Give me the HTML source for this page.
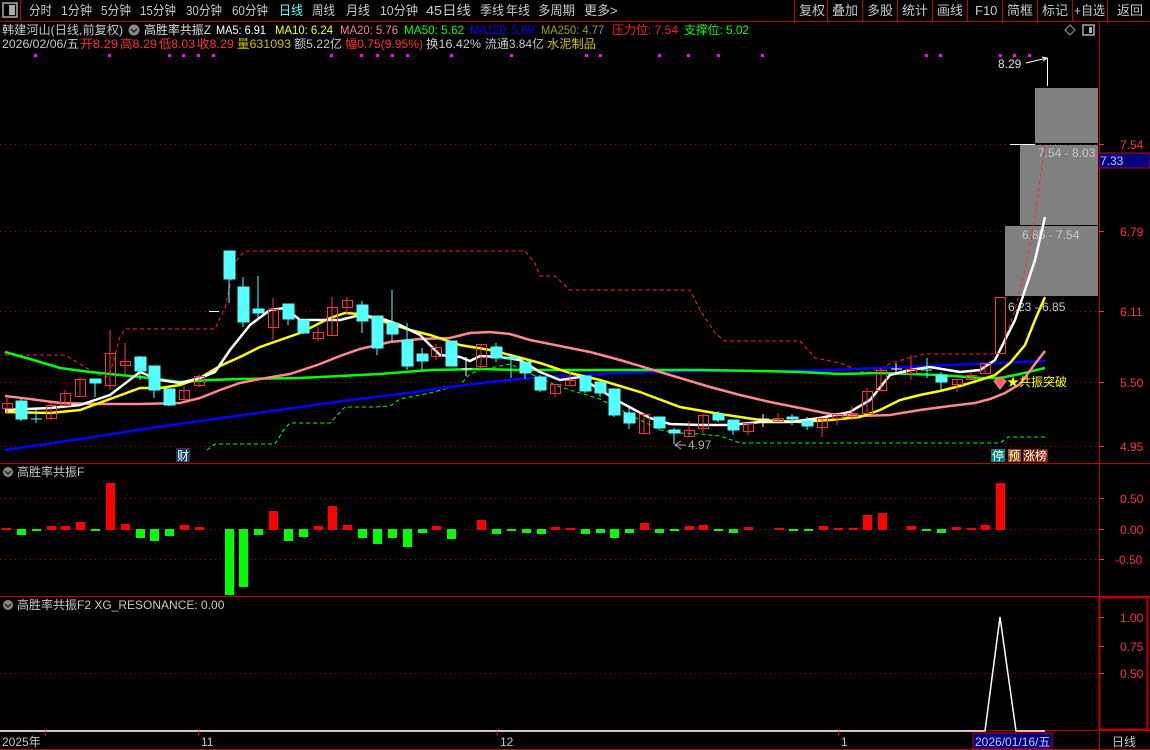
<!DOCTYPE html>
<html><head><meta charset="utf-8">
<style>
html,body{margin:0;padding:0;background:#000;width:1150px;height:750px;overflow:hidden}
svg{display:block}
text{font-family:"Liberation Sans","Noto Sans CJK SC",sans-serif;font-size:12px}
.tb{font-size:13px;fill:#c8c8c8}
</style></head><body>
<svg width="1150" height="750" viewBox="0 0 1150 750" xmlns="http://www.w3.org/2000/svg">
<rect width="1150" height="750" fill="#000"/>
<!-- toolbar -->
<rect x="3" y="3" width="14" height="14" fill="none" stroke="#aaa" stroke-width="1.5"/>
<rect x="9" y="5" width="6" height="10" fill="#aaa"/>
<line x1="20.5" y1="0" x2="20.5" y2="21" stroke="#c00000"/>
<g class="tb">
<text x="29" y="15" class="tb" textLength="23" lengthAdjust="spacingAndGlyphs">分时</text>
<text x="61" y="15" class="tb" textLength="31" lengthAdjust="spacingAndGlyphs">1分钟</text>
<text x="101" y="15" class="tb" textLength="30" lengthAdjust="spacingAndGlyphs">5分钟</text>
<text x="140" y="15" class="tb" textLength="36" lengthAdjust="spacingAndGlyphs">15分钟</text>
<text x="186" y="15" class="tb" textLength="36" lengthAdjust="spacingAndGlyphs">30分钟</text>
<text x="232" y="15" class="tb" textLength="36" lengthAdjust="spacingAndGlyphs">60分钟</text>
<text x="279" y="15" class="tb" style="fill:#54ffff" textLength="24" lengthAdjust="spacingAndGlyphs">日线</text>
<text x="312" y="15" class="tb" textLength="23" lengthAdjust="spacingAndGlyphs">周线</text>
<text x="346" y="15" class="tb" textLength="24" lengthAdjust="spacingAndGlyphs">月线</text>
<text x="380" y="15" class="tb" textLength="38" lengthAdjust="spacingAndGlyphs">10分钟</text>
<text x="426" y="15" class="tb" textLength="45" lengthAdjust="spacingAndGlyphs">45日线</text>
<text x="480" y="15" class="tb" textLength="24" lengthAdjust="spacingAndGlyphs">季线</text>
<text x="506" y="15" class="tb" textLength="24" lengthAdjust="spacingAndGlyphs">年线</text>
<text x="538" y="15" class="tb" textLength="37" lengthAdjust="spacingAndGlyphs">多周期</text>
<text x="584" y="15" class="tb">更多&gt;</text>
<text x="799" y="15" class="tb">复权</text>
<text x="832" y="15" class="tb">叠加</text>
<text x="867" y="15" class="tb">多股</text>
<text x="902" y="15" class="tb">统计</text>
<text x="937" y="15" class="tb">画线</text>
<text x="975" y="15" class="tb">F10</text>
<text x="1007" y="15" class="tb">简框</text>
<text x="1042" y="15" class="tb">标记</text>
<text x="1074" y="15" class="tb" textLength="31" lengthAdjust="spacingAndGlyphs">+自选</text>
<text x="1117" y="15" class="tb">返回</text>
</g>
<g stroke="#c00000">
<line x1="794.5" y1="0" x2="794.5" y2="21"/><line x1="827.5" y1="0" x2="827.5" y2="21"/><line x1="862.5" y1="0" x2="862.5" y2="21"/><line x1="897.5" y1="0" x2="897.5" y2="21"/><line x1="932.5" y1="0" x2="932.5" y2="21"/><line x1="967.5" y1="0" x2="967.5" y2="21"/><line x1="1002.5" y1="0" x2="1002.5" y2="21"/><line x1="1037.5" y1="0" x2="1037.5" y2="21"/><line x1="1072.5" y1="0" x2="1072.5" y2="21"/><line x1="1107.5" y1="0" x2="1107.5" y2="21"/>
<line x1="0" y1="21.5" x2="1150" y2="21.5"/>
<line x1="1099.5" y1="21" x2="1099.5" y2="750"/>
<line x1="0" y1="463.5" x2="1150" y2="463.5"/>
<line x1="0" y1="596.5" x2="1150" y2="596.5"/>
<line x1="0" y1="730.5" x2="1150" y2="730.5"/>
<line x1="0" y1="749.5" x2="1150" y2="749.5"/>
</g>
<rect x="1099.5" y="597.5" width="48" height="132" fill="none" stroke="#c00000" stroke-width="2"/>
<!-- header -->
<text x="2" y="34" fill="#c8c8c8" textLength="121" lengthAdjust="spacingAndGlyphs">韩建河山(日线,前复权)</text>
<circle cx="134" cy="30" r="5.5" fill="#888"/><path d="M131 29 L134 32 L137 29" stroke="#222" fill="none" stroke-width="1.5"/>
<text x="144" y="34" fill="#e0e0e0" textLength="67" lengthAdjust="spacingAndGlyphs">高胜率共振Z</text>
<text x="216" y="34" fill="#fff" textLength="50" lengthAdjust="spacingAndGlyphs">MA5: 6.91</text>
<text x="275" y="34" fill="#ffff00" textLength="58" lengthAdjust="spacingAndGlyphs">MA10: 6.24</text>
<text x="340" y="34" fill="#ff8080" textLength="58" lengthAdjust="spacingAndGlyphs">MA20: 5.76</text>
<text x="404" y="34" fill="#00ff00" textLength="60" lengthAdjust="spacingAndGlyphs">MA50: 5.62</text>
<text x="470" y="34" fill="#0000ff" textLength="64" lengthAdjust="spacingAndGlyphs">MA120: 5.69</text>
<text x="541" y="34" fill="#a0a000" textLength="63" lengthAdjust="spacingAndGlyphs">MA250: 4.77</text>
<text x="612" y="34" fill="#ff2020" textLength="66" lengthAdjust="spacingAndGlyphs">压力位: 7.54</text>
<text x="684" y="34" fill="#00ff00" textLength="65" lengthAdjust="spacingAndGlyphs">支撑位: 5.02</text>
<path d="M1070 25 L1075 30 L1070 35 L1065 30 Z" fill="none" stroke="#999"/>
<rect x="1083" y="25" width="11" height="10" fill="none" stroke="#aaa" stroke-width="1.5"/><rect x="1089" y="27" width="3" height="6" fill="#aaa"/>
<text x="2" y="48" fill="#c8c8c8" textLength="77" lengthAdjust="spacingAndGlyphs">2026/02/06/五</text>
<text x="80" y="48" fill="#ff3030" textLength="38" lengthAdjust="spacingAndGlyphs">开8.29</text>
<text x="120" y="48" fill="#ff3030" textLength="37" lengthAdjust="spacingAndGlyphs">高8.29</text>
<text x="159" y="48" fill="#ff3030" textLength="36" lengthAdjust="spacingAndGlyphs">低8.03</text>
<text x="197" y="48" fill="#ff3030" textLength="37" lengthAdjust="spacingAndGlyphs">收8.29</text>
<text x="237" y="48" fill="#d0c000" textLength="54" lengthAdjust="spacingAndGlyphs">量631093</text>
<text x="294" y="48" fill="#c8c8c8" textLength="48" lengthAdjust="spacingAndGlyphs">额5.22亿</text>
<text x="345" y="48" fill="#ff3030" textLength="78" lengthAdjust="spacingAndGlyphs">幅0.75(9.95%)</text>
<text x="426" y="48" fill="#c8c8c8" textLength="55" lengthAdjust="spacingAndGlyphs">换16.42%</text>
<text x="485" y="48" fill="#c8c8c8" textLength="59" lengthAdjust="spacingAndGlyphs">流通3.84亿</text>
<text x="547" y="48" fill="#d0c000" textLength="49" lengthAdjust="spacingAndGlyphs">水泥制品</text>
<g fill="#ff00ff">
<rect x="34" y="54" width="3" height="3"/><rect x="108" y="54" width="3" height="3"/><rect x="168" y="54" width="3" height="3"/><rect x="182" y="54" width="3" height="3"/><rect x="197" y="54" width="3" height="3"/><rect x="212" y="54" width="3" height="3"/><rect x="330" y="54" width="3" height="3"/><rect x="360" y="54" width="3" height="3"/><rect x="376" y="54" width="3" height="3"/><rect x="391" y="54" width="3" height="3"/><rect x="406" y="54" width="3" height="3"/><rect x="450" y="54" width="3" height="3"/><rect x="510" y="54" width="3" height="3"/><rect x="585" y="54" width="3" height="3"/><rect x="599" y="54" width="3" height="3"/><rect x="658" y="54" width="3" height="3"/><rect x="687" y="54" width="3" height="3"/><rect x="717" y="54" width="3" height="3"/><rect x="761" y="54" width="3" height="3"/><rect x="925" y="54" width="3" height="3"/><rect x="939" y="54" width="3" height="3"/><rect x="999" y="54" width="3" height="3"/><rect x="1013" y="54" width="3" height="3"/><rect x="1028" y="54" width="3" height="3"/>
</g>
<!-- grid dotted -->
<g stroke="#a00000" stroke-dasharray="1,4">
<line x1="0" y1="144.5" x2="1098" y2="144.5"/><line x1="0" y1="231.5" x2="1098" y2="231.5"/><line x1="0" y1="311.5" x2="1098" y2="311.5"/><line x1="0" y1="382.5" x2="1098" y2="382.5"/><line x1="0" y1="446.5" x2="1098" y2="446.5"/>
<line x1="0" y1="498.5" x2="1098" y2="498.5"/><line x1="0" y1="529.5" x2="1098" y2="529.5"/><line x1="0" y1="559.5" x2="1098" y2="559.5"/>
<line x1="0" y1="673.5" x2="1098" y2="673.5"/>
</g>
<!-- right axis -->
<g fill="#ff3030" font-size="12">
<text x="1120" y="149">7.54</text><text x="1120" y="236">6.79</text><text x="1120" y="316">6.11</text><text x="1120" y="387">5.50</text><text x="1120" y="451">4.95</text>
<text x="1120" y="503">0.50</text><text x="1120" y="534">0.00</text><text x="1115" y="564">-0.50</text>
<text x="1120" y="622">1.00</text><text x="1120" y="651">0.75</text><text x="1120" y="678">0.50</text>
</g>
<g stroke="#ff3030">
<line x1="1099" y1="144.5" x2="1104" y2="144.5"/><line x1="1099" y1="231.5" x2="1104" y2="231.5"/><line x1="1099" y1="311.5" x2="1104" y2="311.5"/><line x1="1099" y1="382.5" x2="1104" y2="382.5"/><line x1="1099" y1="446.5" x2="1104" y2="446.5"/>
<line x1="1099" y1="498.5" x2="1104" y2="498.5"/><line x1="1099" y1="529.5" x2="1104" y2="529.5"/><line x1="1099" y1="559.5" x2="1104" y2="559.5"/>
<line x1="1099" y1="617.5" x2="1104" y2="617.5"/><line x1="1099" y1="646.5" x2="1104" y2="646.5"/><line x1="1099" y1="673.5" x2="1104" y2="673.5"/>
</g>
<rect x="1099" y="153" width="51" height="15" fill="#000080" stroke="#c00000"/>
<text x="1100" y="165" fill="#c8c8ff">7.33</text>
<!-- grey boxes -->
<rect x="1035" y="88" width="63" height="55" fill="#808080"/>
<rect x="1020" y="145" width="78" height="80" fill="#808080"/>
<rect x="1005" y="226" width="93" height="70" fill="#808080"/>
<line x1="1010" y1="144.5" x2="1035" y2="144.5" stroke="#fff"/>
<line x1="1010" y1="225.5" x2="1098" y2="225.5" stroke="#000"/>
<text x="1038" y="157" fill="#c8c8c8">7.54 - 8.03</text>
<text x="1022" y="239" fill="#c8c8c8">6.85 - 7.54</text>
<text x="1008" y="311" fill="#c8c8c8">6.23 - 6.85</text>
<text x="998" y="68" fill="#e0e0e0">8.29</text>
<path d="M1026 63 L1047 58 M1042 57 L1047 58 L1043 61 M1047.5 58 L1047.5 86" stroke="#fff" fill="none"/>
<!-- support/resistance -->
<polyline fill="none" stroke="#ff2020" stroke-dasharray="4,3" points="5,355 65,355 90,370 105,378 110,373 120,337 125,329 215,329 225,308 235,262 245,251 525,251 535,263 540,276 555,276 570,290 690,290 700,310 715,333 725,341 800,341 815,358 830,361 840,363 862,372 870,372 895,362 905,359 925,354 998,354"/>
<polyline fill="none" stroke="#ff2020" stroke-dasharray="4,3" points="998,354 1008,330 1015,310 1025,270 1033,230 1040,180 1045,145"/>
<polyline fill="none" stroke="#00ff00" stroke-dasharray="4,3" points="207,450 215,444 275,444 285,428 290,423 330,423 345,407 375,407 390,406 400,399 430,393 460,385 470,374 480,370 510,364 520,369 540,378 560,387 600,399 640,420 660,430 680,433 700,434 720,436 740,443 1000,443 1008,437 1045,437"/>
<!-- MAs -->
<polyline fill="none" stroke="#0000ff" stroke-width="2.5" points="5,450 60,442 100,436 150,428 200,421 250,414 300,407 350,400 400,394 450,387 490,382 520,379 560,376 600,374 650,372 700,371 780,371 830,370 880,368 930,366 970,364 1000,363 1045,361"/>
<polyline fill="none" stroke="#00ff00" stroke-width="2.5" points="5,352 30,359 60,368 90,372 120,375 150,378 180,382 210,380 240,379 300,378 380,374 430,370 480,369 520,370 560,370 600,370 640,370 700,370 760,371 800,372 840,374 880,373 940,375 980,378 1000,378 1020,374 1045,368"/>
<polyline fill="none" stroke="#ff8888" stroke-width="2.5" points="5,396 30,399 60,403 100,404 140,404 180,403 200,398 220,390 240,383 260,379 290,374 320,364 340,356 360,349 390,342 420,339 450,338 470,333 490,332 510,334 530,340 560,346 590,352 620,360 650,369 680,378 710,387 740,395 770,402 800,408 830,414 860,416 890,415 920,410 950,406 975,403 990,399 1005,393 1020,384 1035,364 1045,351"/>
<polyline fill="none" stroke="#ffff00" stroke-width="2.5" points="5,412 50,413 80,410 110,399 140,388 160,388 180,385 200,378 220,366 240,357 260,347 280,340 300,333 330,318 345,313 360,314 385,322 410,330 430,335 460,345 490,350 510,355 540,363 570,373 600,380 640,392 680,407 720,414 760,420 800,422 830,420 860,417 880,410 900,400 920,395 940,391 960,386 980,380 995,375 1010,363 1025,345 1035,320 1045,297"/>
<polyline fill="none" stroke="#ffffff" stroke-width="2.5" points="5,410 50,408 80,405 110,395 140,372 160,380 180,383 200,378 215,372 230,350 250,325 270,310 285,308 300,320 315,320 340,320 360,315 380,318 400,325 420,335 440,355 460,357 470,361 480,356 500,357 520,360 540,372 560,380 580,377 600,390 620,402 650,418 670,424 700,425 730,425 760,422 790,422 820,418 850,412 870,400 890,375 910,370 930,367 960,372 980,370 995,360 1005,340 1015,320 1025,290 1035,260 1045,217"/>
<!-- candles red hollow -->
<g stroke="#ff3232" fill="none">
<line x1="7" y1="398" x2="7" y2="413"/><rect x="2.5" y="403.5" width="10" height="5"/>
<line x1="51" y1="403" x2="51" y2="420"/><rect x="46.5" y="405.5" width="10" height="13"/>
<line x1="65" y1="390" x2="65" y2="406"/><rect x="60.5" y="393.5" width="10" height="12"/>
<line x1="80" y1="377" x2="80" y2="397"/><rect x="75.5" y="379.5" width="10" height="17"/>
<line x1="110" y1="330" x2="110" y2="390"/><rect x="105.5" y="353.5" width="10" height="32"/>
<line x1="125" y1="343" x2="125" y2="375"/><rect x="120.5" y="361.5" width="10" height="4"/>
<line x1="184" y1="386" x2="184" y2="400"/><rect x="179.5" y="390.5" width="10" height="9"/>
<line x1="199" y1="374" x2="199" y2="387"/><rect x="194.5" y="376.5" width="10" height="9"/>
<line x1="273" y1="298" x2="273" y2="340"/><rect x="268.5" y="309.5" width="10" height="18"/>
<line x1="318" y1="327" x2="318" y2="341"/><rect x="313.5" y="332.5" width="10" height="6"/>
<line x1="332" y1="297" x2="332" y2="335"/><rect x="327.5" y="307.5" width="10" height="28"/>
<line x1="347" y1="297" x2="347" y2="314"/><rect x="342.5" y="300.5" width="10" height="7"/>
<line x1="436" y1="344" x2="436" y2="360"/><rect x="431.5" y="347.5" width="10" height="9"/>
<line x1="481" y1="344" x2="481" y2="369"/><rect x="476.5" y="344.5" width="10" height="22"/>
<line x1="555" y1="384" x2="555" y2="397"/><rect x="550.5" y="384.5" width="10" height="9"/>
<line x1="570" y1="372" x2="570" y2="386"/><rect x="565.5" y="380.5" width="10" height="5"/>
<line x1="644" y1="414" x2="644" y2="434"/><rect x="639.5" y="414.5" width="10" height="19"/>
<line x1="689" y1="421" x2="689" y2="437"/><rect x="684.5" y="430.5" width="10" height="6"/>
<line x1="703" y1="414" x2="703" y2="433"/><rect x="698.5" y="415.5" width="10" height="13"/>
<line x1="748" y1="423" x2="748" y2="435"/><rect x="743.5" y="423.5" width="10" height="8"/>
<line x1="778" y1="413" x2="778" y2="421"/><rect x="773.5" y="418.5" width="10" height="3"/>
<line x1="822" y1="418" x2="822" y2="437"/><rect x="817.5" y="418.5" width="10" height="9"/>
<line x1="837" y1="414" x2="837" y2="425"/><rect x="832.5" y="414.5" width="10" height="4"/>
<line x1="852" y1="406" x2="852" y2="420"/><rect x="847.5" y="413.5" width="10" height="3"/>
<line x1="867" y1="388" x2="867" y2="414"/><rect x="862.5" y="391.5" width="10" height="22"/>
<line x1="881" y1="368" x2="881" y2="391"/><rect x="876.5" y="370.5" width="10" height="20"/>
<line x1="911" y1="355" x2="911" y2="380"/><rect x="906.5" y="369.5" width="10" height="4"/>
<line x1="957" y1="379" x2="957" y2="392"/><rect x="952.5" y="379.5" width="10" height="5"/>
<line x1="971" y1="372" x2="971" y2="379"/><rect x="966.5" y="375.5" width="10" height="4"/>
<line x1="985" y1="363" x2="985" y2="373"/><rect x="980.5" y="363.5" width="10" height="10"/>
<rect x="995.5" y="297.5" width="10" height="56"/>
</g>
<!-- candles cyan -->
<g stroke="#54ffff" fill="#54ffff">
<line x1="21" y1="398" x2="21" y2="421"/><rect x="16" y="401" width="11" height="18"/>
<line x1="36" y1="410" x2="36" y2="423"/><line x1="31" y1="419" x2="42" y2="419"/>
<line x1="95" y1="379" x2="95" y2="397"/><rect x="90" y="379" width="11" height="4"/>
<line x1="140" y1="356" x2="140" y2="380"/><rect x="135" y="357" width="11" height="14"/>
<line x1="154" y1="366" x2="154" y2="398"/><rect x="149" y="366" width="11" height="24"/>
<line x1="169" y1="389" x2="169" y2="406"/><rect x="164" y="389" width="11" height="16"/>
<line x1="229" y1="251" x2="229" y2="303"/><rect x="224" y="251" width="11" height="28"/>
<line x1="243" y1="277" x2="243" y2="327"/><rect x="238" y="287" width="11" height="35"/>
<line x1="258" y1="276" x2="258" y2="320"/><rect x="253" y="309" width="11" height="4"/>
<line x1="288" y1="304" x2="288" y2="325"/><rect x="283" y="304" width="11" height="15"/>
<line x1="303" y1="320" x2="303" y2="334"/><rect x="298" y="320" width="11" height="13"/>
<line x1="362" y1="301" x2="362" y2="333"/><rect x="357" y="305" width="11" height="16"/>
<line x1="377" y1="316" x2="377" y2="355"/><rect x="372" y="316" width="11" height="32"/>
<line x1="392" y1="290" x2="392" y2="341"/><rect x="387" y="323" width="11" height="11"/>
<line x1="407" y1="323" x2="407" y2="370"/><rect x="402" y="340" width="11" height="26"/>
<line x1="422" y1="348" x2="422" y2="370"/><rect x="417" y="354" width="11" height="7"/>
<line x1="451" y1="341" x2="451" y2="366"/><rect x="446" y="341" width="11" height="25"/>
<line x1="496" y1="343" x2="496" y2="362"/><rect x="491" y="347" width="11" height="11"/>
<line x1="511" y1="355" x2="511" y2="378"/><rect x="506" y="357" width="11" height="2"/>
<line x1="525" y1="362" x2="525" y2="379"/><rect x="520" y="362" width="11" height="11"/>
<line x1="540" y1="375" x2="540" y2="392"/><rect x="535" y="377" width="11" height="13"/>
<line x1="585" y1="376" x2="585" y2="393"/><rect x="580" y="376" width="11" height="15"/>
<line x1="600" y1="382" x2="600" y2="397"/><rect x="595" y="382" width="11" height="11"/>
<line x1="614" y1="389" x2="614" y2="417"/><rect x="609" y="389" width="11" height="26"/>
<line x1="629" y1="407" x2="629" y2="429"/><rect x="624" y="413" width="11" height="10"/>
<line x1="659" y1="417" x2="659" y2="430"/><rect x="654" y="417" width="11" height="11"/>
<line x1="674" y1="428" x2="674" y2="444"/><rect x="669" y="430" width="11" height="3"/>
<line x1="718" y1="411" x2="718" y2="422"/><rect x="713" y="414" width="11" height="6"/>
<line x1="733" y1="420" x2="733" y2="435"/><rect x="728" y="420" width="11" height="10"/>
<line x1="792" y1="414" x2="792" y2="425"/><rect x="787" y="417" width="11" height="2"/>
<line x1="807" y1="417" x2="807" y2="430"/><rect x="802" y="421" width="11" height="5"/>
<line x1="927" y1="358" x2="927" y2="378"/><line x1="921" y1="370" x2="932" y2="370"/>
<line x1="941" y1="372" x2="941" y2="390"/><rect x="936" y="375" width="11" height="7"/>
</g>
<g stroke="#fff">
<line x1="209" y1="311.5" x2="219" y2="311.5"/>
<line x1="466" y1="357" x2="466" y2="376"/><line x1="461" y1="369" x2="472" y2="369"/>
<line x1="763" y1="414" x2="763" y2="427"/><line x1="758" y1="419" x2="769" y2="419"/>
<line x1="896" y1="363" x2="896" y2="375"/><line x1="891" y1="369" x2="902" y2="369"/>
</g>
<!-- chart labels -->
<path d="M681 441 L675 445 L681 449 M675 445 L686 445" stroke="#aaa" fill="none"/>
<text x="688" y="449" fill="#aaa">4.97</text>
<rect x="176" y="448" width="14" height="14" fill="#1a3a6a"/><text x="177" y="460" fill="#fff">财</text>
<rect x="991" y="449" width="14" height="13" fill="#008080"/><text x="992" y="460" fill="#fff">停</text>
<rect x="1008" y="449" width="13" height="13" fill="#a04000"/><text x="1008" y="460" fill="#fff">预</text>
<rect x="1023" y="449" width="25" height="13" fill="#802000"/><text x="1023" y="460" fill="#fff">涨榜</text>
<path d="M994 381 L1000 377 L1006 381 L1000 389 Z" fill="#ff6060" stroke="#ff9090"/>
<text x="1007" y="386" fill="#ffff00">★共振突破</text>
<!-- panel 2 -->
<circle cx="8" cy="472" r="5" fill="#888"/><path d="M5 471 L8 474 L11 471" stroke="#222" fill="none" stroke-width="1.5"/>
<text x="17" y="476" fill="#c8c8c8">高胜率共振F</text>
<g fill="#ff0000">
<rect x="2" y="528" width="9" height="2"/><rect x="47" y="526" width="9" height="4"/><rect x="61" y="526" width="9" height="4"/><rect x="76" y="522" width="9" height="8"/><rect x="106" y="483" width="9" height="47"/><rect x="121" y="524" width="9" height="6"/><rect x="180" y="525" width="9" height="5"/><rect x="195" y="527" width="9" height="3"/><rect x="269" y="511" width="9" height="19"/><rect x="314" y="526" width="9" height="4"/><rect x="328" y="506" width="9" height="24"/><rect x="343" y="525" width="9" height="5"/><rect x="432" y="526" width="9" height="4"/><rect x="477" y="520" width="9" height="10"/>
<rect x="551" y="527" width="9" height="3"/><rect x="566" y="528" width="9" height="2"/><rect x="640" y="523" width="9" height="7"/><rect x="685" y="526" width="9" height="4"/><rect x="699" y="525" width="9" height="5"/><rect x="744" y="527" width="9" height="3"/><rect x="775" y="528" width="9" height="2"/><rect x="819" y="526" width="9" height="4"/><rect x="834" y="528" width="9" height="2"/><rect x="849" y="528" width="9" height="2"/><rect x="863" y="515" width="9" height="15"/><rect x="878" y="513" width="9" height="17"/><rect x="907" y="526" width="9" height="4"/><rect x="952" y="527" width="9" height="3"/><rect x="967" y="528" width="9" height="2"/><rect x="981" y="525" width="9" height="5"/><rect x="996" y="483" width="9" height="47"/>
</g>
<g fill="#00ff00">
<rect x="17" y="529" width="9" height="6"/><rect x="32" y="529" width="9" height="2"/><rect x="91" y="529" width="9" height="2"/><rect x="136" y="529" width="9" height="9"/><rect x="150" y="529" width="9" height="12"/><rect x="165" y="529" width="9" height="7"/><rect x="225" y="529" width="9" height="66"/><rect x="239" y="529" width="9" height="58"/><rect x="254" y="529" width="9" height="6"/><rect x="284" y="529" width="9" height="12"/><rect x="299" y="529" width="9" height="8"/><rect x="358" y="529" width="9" height="9"/><rect x="373" y="529" width="9" height="15"/><rect x="388" y="529" width="9" height="9"/><rect x="403" y="529" width="9" height="18"/><rect x="418" y="529" width="9" height="4"/><rect x="447" y="529" width="9" height="10"/><rect x="492" y="529" width="9" height="5"/>
<rect x="507" y="529" width="9" height="2"/><rect x="522" y="529" width="9" height="4"/><rect x="537" y="529" width="9" height="5"/><rect x="581" y="529" width="9" height="5"/><rect x="596" y="529" width="9" height="4"/><rect x="610" y="529" width="9" height="9"/><rect x="625" y="529" width="9" height="4"/><rect x="655" y="529" width="9" height="4"/><rect x="670" y="529" width="9" height="2"/><rect x="714" y="529" width="9" height="2"/><rect x="729" y="529" width="9" height="4"/><rect x="789" y="529" width="9" height="2"/><rect x="804" y="529" width="9" height="2"/><rect x="922" y="529" width="9" height="2"/><rect x="937" y="529" width="9" height="4"/>
</g>
<!-- panel 3 -->
<circle cx="8" cy="605" r="5" fill="#888"/><path d="M5 604 L8 607 L11 604" stroke="#222" fill="none" stroke-width="1.5"/>
<text x="17" y="609" fill="#c8c8c8">高胜率共振F2 XG_RESONANCE: 0.00</text>
<polyline fill="none" stroke="#fff" stroke-width="1.5" points="0,731 985,731 1000,617 1016,731 1045,731"/>
<!-- bottom axis -->
<g stroke="#c00000"><line x1="198.5" y1="731" x2="198.5" y2="736"/><line x1="497.5" y1="731" x2="497.5" y2="736"/><line x1="838.5" y1="731" x2="838.5" y2="736"/><line x1="45.5" y1="731" x2="45.5" y2="736"/></g>
<text x="2" y="746" fill="#c8c8c8">2025年</text>
<text x="201" y="746" fill="#c8c8c8">11</text>
<text x="500" y="746" fill="#c8c8c8">12</text>
<text x="841" y="746" fill="#c8c8c8">1</text>
<rect x="973" y="733" width="79" height="16" fill="#000080" stroke="#c00000"/>
<text x="975" y="746" fill="#c8c8ff">2026/01/16/五</text>
<text x="1112" y="746" fill="#c8c8c8">日线</text>
</svg>
</body></html>
